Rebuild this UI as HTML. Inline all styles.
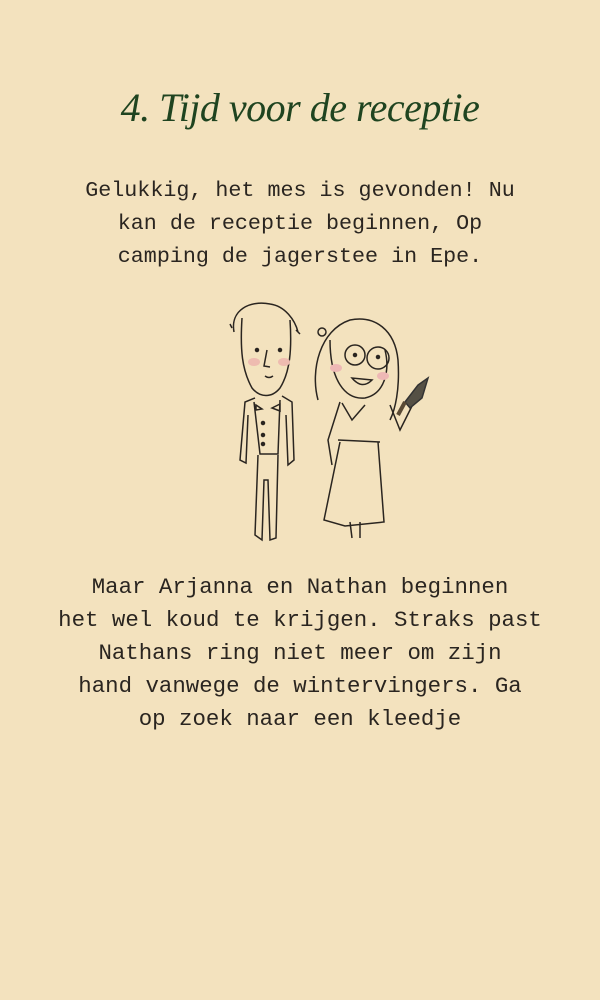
<!DOCTYPE html>
<html><head><meta charset="utf-8"><style>
html,body{margin:0;padding:0}
body{width:600px;height:1000px;background:#f3e2be;position:relative;overflow:hidden}
.t{position:absolute;left:0;width:600px;text-align:center;color:#1f4420;font-family:"Liberation Serif",serif;font-style:italic;font-size:40px;top:84px;letter-spacing:-0.5px}
.p{position:absolute;left:0;width:600px;text-align:center;font-family:"Liberation Mono",monospace;color:#2a2520;line-height:33px}
</style></head><body>
<div class="t">4. Tijd voor de receptie</div>
<div class="p" style="top:174px;font-size:21.7px">Gelukkig, het mes is gevonden! Nu<br>kan de receptie beginnen, Op<br>camping de jagerstee in Epe.</div>
<svg style="position:absolute;left:200px;top:290px" width="240" height="260" viewBox="0 0 240 260" fill="none" stroke="#2a2520" stroke-width="1.5">
<path d="M34 42 C30 20 50 10 70 14 C85 16 95 30 98 42 M32 38 L30 34 M96 40 L100 44"/>
<path d="M42 28 C40 60 42 80 52 98 C60 108 72 108 80 98 C90 82 92 60 90 30"/>
<circle cx="57" cy="60" r="1.5" fill="#2a2520"/><circle cx="80" cy="60" r="1.5" fill="#2a2520"/>
<ellipse cx="54" cy="72" rx="6" ry="4" fill="#eebbb0" stroke="none"/><ellipse cx="84" cy="72" rx="6" ry="4" fill="#eebbb0" stroke="none"/>
<path d="M67 60 L64 76 L70 77 M65 86 Q69 89 73 86"/>
<path d="M55 108 L45 112 L40 170 L46 173 L48 125 M82 106 L92 112 L94 170 L88 175 L86 125 M54 112 L60 164 L78 164 L80 110 M56 115 L62 119 L56 120 Z M80 114 L72 118 L80 121 Z M58 165 L55 245 L62 250 L64 190 L68 190 L70 250 L76 248 L78 165"/>
<circle cx="63" cy="133" r="1.5" fill="#2a2520"/><circle cx="63" cy="145" r="1.5" fill="#2a2520"/><circle cx="63" cy="154" r="1.5" fill="#2a2520"/>
<path d="M118 110 C110 80 120 40 150 30 C175 25 195 40 198 70 C200 100 195 120 190 130"/>
<path d="M130 50 C130 90 145 110 165 108 C185 104 190 80 185 60"/>
<circle cx="155" cy="65" r="10"/><circle cx="178" cy="68" r="11"/>
<circle cx="155" cy="65" r="1.5" fill="#2a2520"/><circle cx="178" cy="67" r="1.5" fill="#2a2520"/>
<ellipse cx="136" cy="78" rx="6" ry="4" fill="#eeb8b5" stroke="none"/><ellipse cx="183" cy="86" rx="6" ry="4" fill="#eeb8b5" stroke="none"/>
<path d="M152 88 Q162 100 172 90 Z"/>
<path d="M140 112 L128 150 L132 175 M190 115 L200 140 L215 110 M142 113 L152 130 L165 115 M138 150 L180 152 M140 152 L124 230 L145 236 L184 232 L178 152 M150 232 L152 248 M160 232 L160 248"/>
<path d="M205 112 L218 95 L228 88 L222 108 L210 118 Z" fill="#555045" stroke="#333"/>
<path d="M205 112 L198 125" stroke="#5a4a35" stroke-width="4"/>
<circle cx="122" cy="42" r="4"/>
</svg>
<div class="p" style="top:571px;font-size:22.4px">Maar Arjanna en Nathan beginnen<br>het wel koud te krijgen. Straks past<br>Nathans ring niet meer om zijn<br>hand vanwege de wintervingers. Ga<br>op zoek naar een kleedje</div>
</body></html>
